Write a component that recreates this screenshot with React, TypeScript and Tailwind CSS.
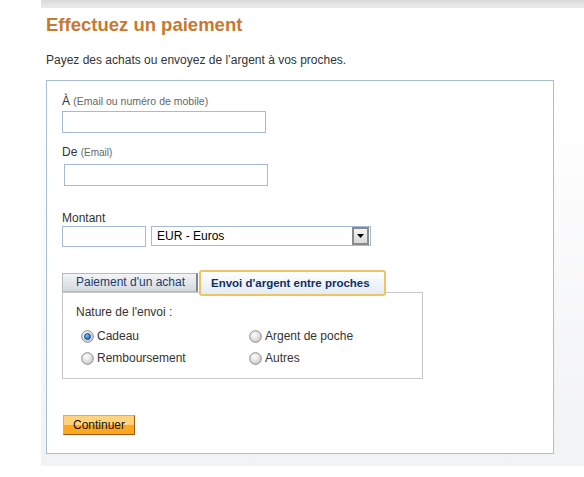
import { useState } from 'react';

type Radio = { id: string; label: string };

const natures: Radio[] = [
  { id: 'cadeau', label: 'Cadeau' },
  { id: 'poche', label: 'Argent de poche' },
  { id: 'remboursement', label: 'Remboursement' },
  { id: 'autres', label: 'Autres' },
];

const RadioDot = ({ checked }: { checked: boolean }) => (
  <svg width="13" height="13" viewBox="0 0 13 13" className="shrink-0">
    <defs>
      <radialGradient id="rb-off" cx="40%" cy="35%" r="70%">
        <stop offset="0%" stopColor="#ffffff" />
        <stop offset="100%" stopColor="#c9c9c9" />
      </radialGradient>
      <radialGradient id="rb-on" cx="40%" cy="35%" r="70%">
        <stop offset="0%" stopColor="#7fc0ff" />
        <stop offset="100%" stopColor="#0b5bc0" />
      </radialGradient>
    </defs>
    <circle cx="6.5" cy="6.5" r="5.8" fill="url(#rb-off)" stroke="#8c8c8c" strokeWidth="1" />
    {checked && <circle cx="6.5" cy="6.5" r="3" fill="url(#rb-on)" stroke="#0a3a7a" strokeWidth="0.8" />}
  </svg>
);

const App = () => {
  const [tab, setTab] = useState<'achat' | 'proches'>('proches');
  const [nature, setNature] = useState('cadeau');

  return (
    <div className="h-[477px] w-full bg-white font-['Liberation_Sans',Arial,sans-serif] text-[#333]" data-tab={tab}>
      <div className="ml-[41px] flex flex-col bg-linear-to-b from-white from-[20%] to-[#f1f2f4]">
        {/* top strip */}
        <div className="h-2 bg-linear-to-b from-[#d9d9d9] to-[#ececec] border-b border-[#e3e9f0]" />

        <div className="pl-[5px] pb-[12px]">
          <h1 className="mt-[7px] text-[18.5px] leading-[20px] font-bold text-[#c8782f]">Effectuez un paiement</h1>
          <p className="mt-[17px] text-[12px] leading-[16px]">
            Payez des achats ou envoyez de l’argent à vos proches.
          </p>

          <div className="mt-[12px] w-[508px] border border-[#a9bdd3] bg-white pl-[15px] pt-[13px] pb-[17px]">
            <label className="block h-[14px] text-[12px] leading-[14px]">
              À <span className="text-[10.5px] text-[#666]">(Email ou numéro de mobile)</span>
            </label>
            <input className="mt-[3px] block h-[22px] w-[204px] border border-[#a3bbd5] bg-white px-1 text-[12px] outline-none" />

            <label className="mt-[12px] block h-[14px] text-[12px] leading-[14px]">
              De <span className="text-[10px] text-[#666]">(Email)</span>
            </label>
            <input className="mt-[5px] ml-[2px] block h-[22px] w-[204px] border border-[#a3bbd5] bg-white px-1 text-[12px] outline-none" />

            <label className="mt-[25px] block h-[14px] text-[12px] leading-[14px]">Montant</label>
            <div className="mt-[1px] flex items-start gap-[5px]">
              <input className="block h-[21px] w-[84px] border border-[#a3bbd5] bg-white px-1 text-[12px] outline-none" />
              <div className="flex h-[20px] w-[220px] items-center justify-between border border-[#a3bbd5] bg-white pl-[5px] pr-px">
                <span className="text-[12px] text-black">EUR - Euros</span>
                <span className="flex h-[18px] w-[17px] items-center justify-center border-2 border-[#8a8a8a] bg-linear-to-b from-[#f4f4f4] to-[#d9d9d9]">
                  <svg width="7" height="4" viewBox="0 0 7 4">
                    <path d="M0 0h7L3.5 4z" fill="#000" />
                  </svg>
                </span>
              </div>
            </div>

            {/* tabs */}
            <div className="mt-[23px] flex h-[22px] items-end gap-px">
              <button
                onClick={() => setTab('achat')}
                className="h-[19px] w-[136px] border border-[#b3bac3] border-r-2 border-r-[#7d858f] bg-linear-to-b from-[#f3f5f7] to-[#d4d9df] pl-[13px] text-left text-[12px] leading-[17px] text-[#1d3b6e]"
              >
                Paiement d'un achat
              </button>
              <button
                onClick={() => setTab('proches')}
                className="relative z-10 -mb-[4px] h-[26px] w-[187px] rounded-[3px] border-2 border-[#f0c264] bg-linear-to-b from-white to-[#e4ebf3] pl-[10px] text-left text-[11.5px] leading-[22px] font-bold text-[#0f2f63]"
              >
                Envoi d'argent entre proches
              </button>
            </div>
            <div className="h-[87px] w-[361px] border border-[#c8c8c8] bg-white pl-[13px] pt-[12px]">
              <p className="text-[12px] leading-[14px]">Nature de l'envoi :</p>
              <div className="mt-[10px] grid grid-cols-[168px_auto] gap-y-[8px] pl-[5px]">
                {natures.map(n => (
                  <label
                    key={n.id}
                    onClick={() => setNature(n.id)}
                    className="flex h-[14px] items-center gap-[3px] text-[12px] leading-[14px]"
                  >
                    <RadioDot checked={nature === n.id} />
                    {n.label}
                  </label>
                ))}
              </div>
            </div>

            <button className="mt-[36px] ml-[1px] h-[20px] w-[72px] border border-[#e0ac55] border-r-[#9a5b12] border-b-[#9a5b12] bg-linear-to-b from-[#ffd37e] from-50% to-[#ffa621] to-50% text-[12px] leading-[17px] text-[#111]">
              Continuer
            </button>
          </div>
        </div>
      </div>
    </div>
  );
};

export default App;
